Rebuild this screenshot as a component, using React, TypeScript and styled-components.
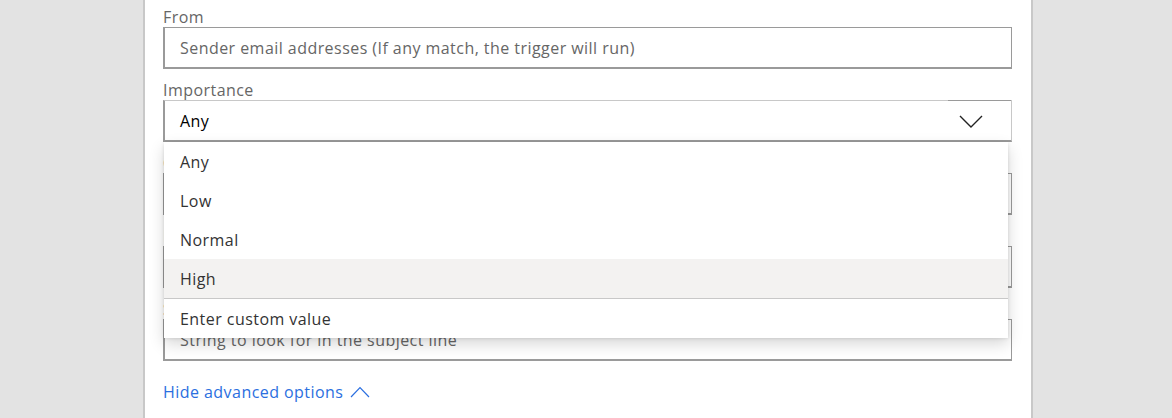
import { createGlobalStyle } from "styled-components";
import styled from "styled-components";

const GlobalStyle = createGlobalStyle`
  html, body {
    margin: 0;
    padding: 0;
    background: #e3e3e3;
    font-family: "Open Sans", "Noto Sans", sans-serif;
    overflow: hidden;
  }
`;

const Page = styled.div`
  width: 1172px;
  height: 418px;
  display: grid;
  grid-template-columns: 143px 890px 1fr;
`;

const Card = styled.div`
  grid-column: 2;
  background: #fff;
  border-left: 2px solid #c8c8c8;
  border-right: 2px solid #c8c8c8;
  padding: 7px 19px 0 18px;
  display: flex;
  flex-direction: column;
  letter-spacing: 0.45px;
`;

const Field = styled.div`
  position: relative;
  display: flex;
  flex-direction: column;
  margin-bottom: 11px;
`;

const Label = styled.label`
  font-size: 16px;
  line-height: 20px;
  color: #666;
  height: 20px;
`;

const Box = styled.div<{ $active?: boolean }>`
  height: 42px;
  box-sizing: border-box;
  border: 1px solid ${({ $active }) => ($active ? "#c8c8c8" : "#9a9a9a")};
  border-bottom-width: 2px;
  border-left-width: 2px;
  border-left-color: #9a9a9a;
  border-bottom-color: #9a9a9a;
  display: flex;
  align-items: center;
  padding-left: 15px;
  font-size: 16px;
  color: ${({ $active }) => ($active ? "#000" : "#666")};
`;

const BoxText = styled.span`
  flex: 1;
  white-space: nowrap;
`;

const ChevronButton = styled.div`
  width: 63px;
  height: 42px;
  margin-top: -1px;
  margin-bottom: -1px;
  box-sizing: border-box;
  border-top: 1px solid #9a9a9a;
  display: flex;
  align-items: center;
  justify-content: center;
  padding-right: 18px;
`;

const Menu = styled.div`
  position: absolute;
  top: 100%;
  left: 1px;
  width: 844px;
  background: #fff;
  z-index: 10;
  box-shadow: 0 6.4px 14.4px 0 rgba(0, 0, 0, 0.16), 0 1.2px 3.6px 0 rgba(0, 0, 0, 0.12);
`;

const MenuItem = styled.div<{ $hover?: boolean }>`
  height: 39px;
  display: flex;
  align-items: center;
  padding-left: 16px;
  font-size: 16px;
  color: #333;
  background: ${({ $hover }) => ($hover ? "#f3f2f1" : "#fff")};
`;

const Divider = styled.div`
  height: 1px;
  background: #c8c8c8;
`;

const AdvancedLink = styled.a`
  display: flex;
  align-items: center;
  gap: 7px;
  margin-top: 9px;
  font-size: 16px;
  line-height: 22px;
  color: #2b6fe0;
  text-decoration: none;
  cursor: pointer;
`;

const ChevronDown = () => (
  <svg width="24" height="13" viewBox="0 0 24 13">
    <polyline points="1,1 12,12 23,1" fill="none" stroke="#222" strokeWidth="1.4" />
  </svg>
);

const ChevronUp = () => (
  <svg width="20" height="12" viewBox="0 0 20 12">
    <polyline points="1,11 10,1.5 19,11" fill="none" stroke="#2b6fe0" strokeWidth="1.2" />
  </svg>
);

const options = ["Any", "Low", "Normal", "High"];

const App = () => {
  return (
    <Page>
      <GlobalStyle />
      <Card>
        <Field>
          <Label>From</Label>
          <Box>
            <BoxText>Sender email addresses (If any match, the trigger will run)</BoxText>
          </Box>
        </Field>
        <Field>
          <Label>Importance</Label>
          <Box $active>
            <BoxText>Any</BoxText>
            <ChevronButton>
              <ChevronDown />
            </ChevronButton>
          </Box>
          <Menu>
            {options.map((o) => (
              <MenuItem key={o} $hover={o === "High"}>
                {o}
              </MenuItem>
            ))}
            <Divider />
            <MenuItem>Enter custom value</MenuItem>
          </Menu>
        </Field>
        <Field>
          <Label>Only with Attachments</Label>
          <Box>
            <BoxText>No</BoxText>
          </Box>
        </Field>
        <Field>
          <Label>Include Attachments</Label>
          <Box>
            <BoxText>No</BoxText>
          </Box>
        </Field>
        <Field>
          <Label>Subject Filter</Label>
          <Box>
            <BoxText>String to look for in the subject line</BoxText>
          </Box>
        </Field>
        <AdvancedLink>
          Hide advanced options
          <ChevronUp />
        </AdvancedLink>
      </Card>
    </Page>
  );
};

export default App;
